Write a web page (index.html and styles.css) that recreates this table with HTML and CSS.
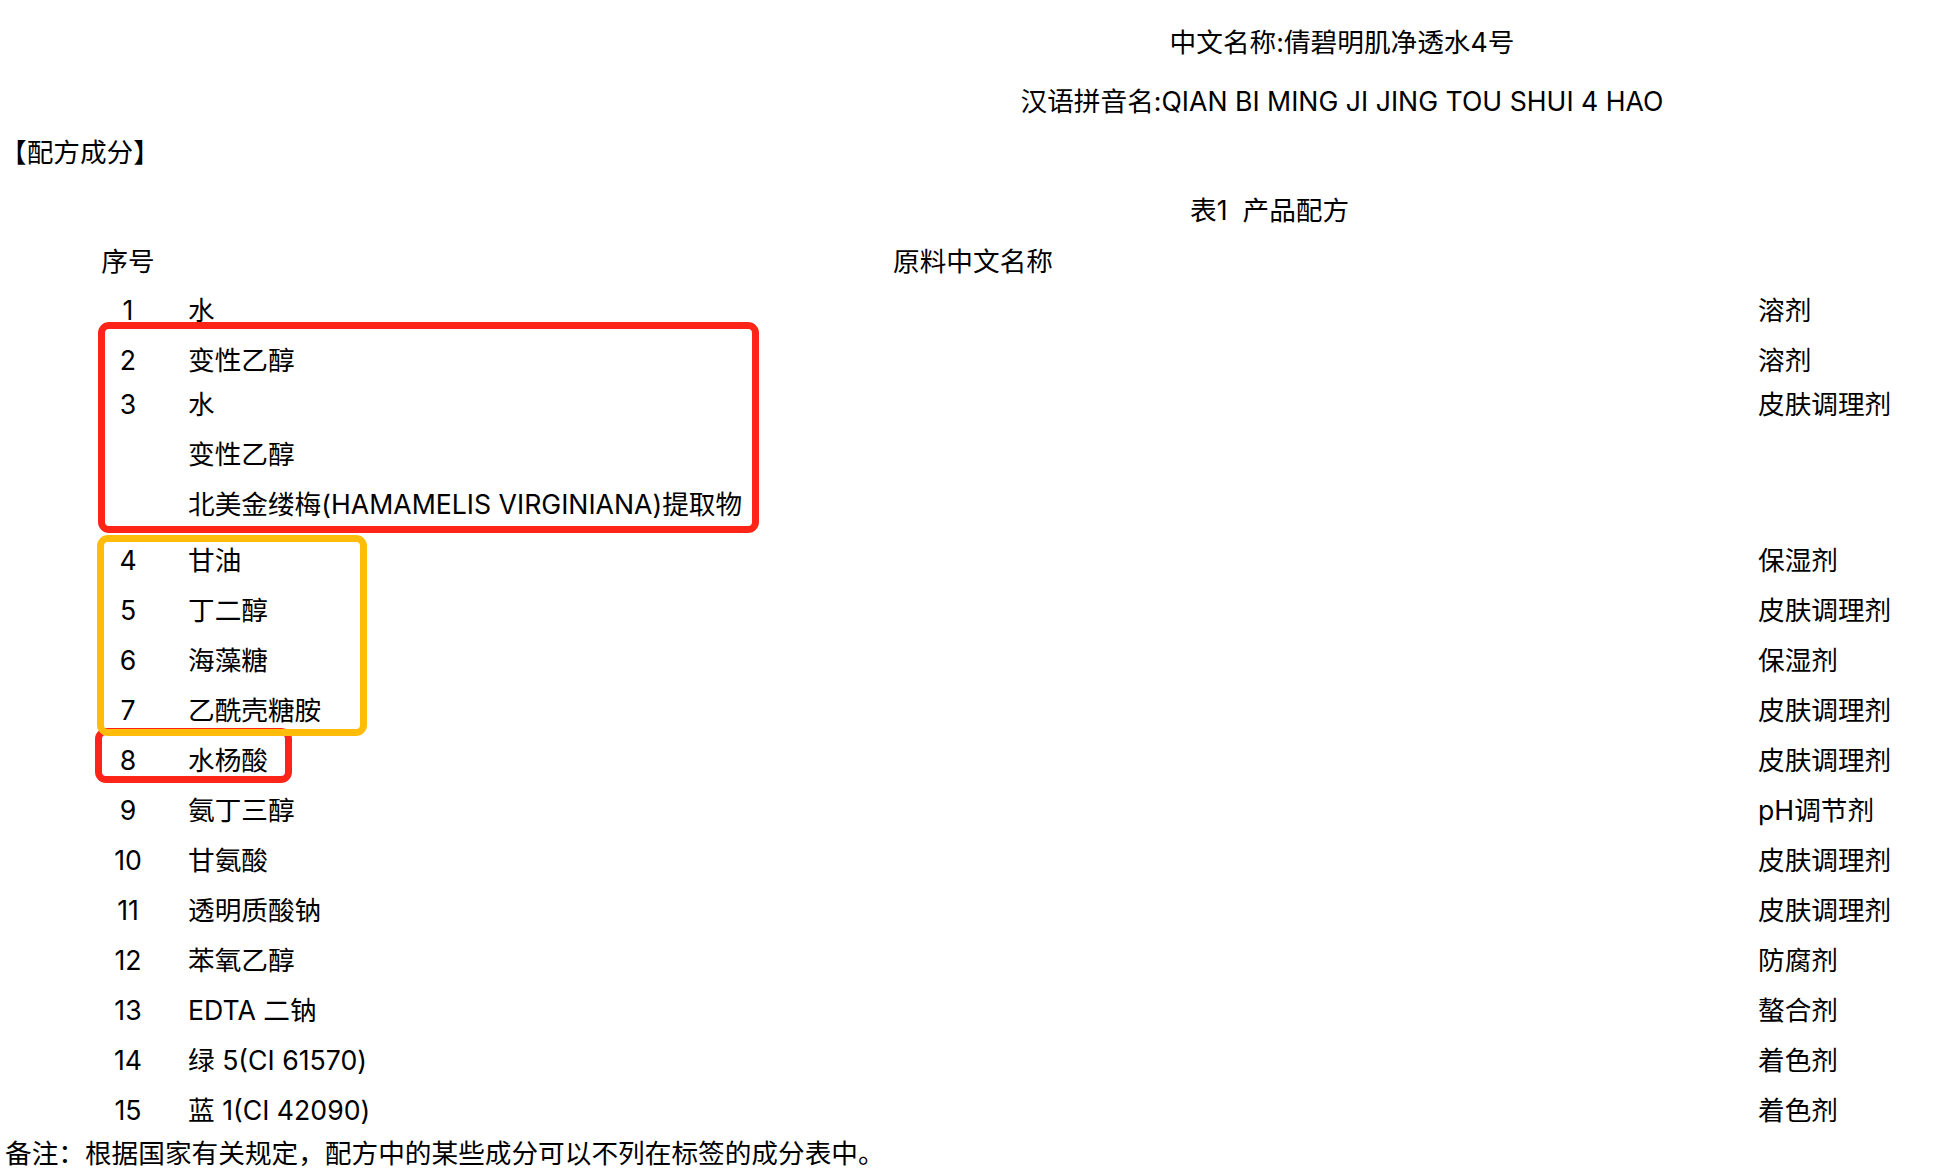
FILE: index.html
```html
<!DOCTYPE html>
<html lang="zh-CN">
<head>
    <meta charset="UTF-8">
    <meta name="viewport" content="width=device-width, initial-scale=1.0">
    <title>倩碧明肌净透水4号 配方成分</title>
    <link rel="stylesheet" href="styles.css">
</head>
<body>

<div class="page">
    <!-- Product names -->
    <p class="doc-title first">中文名称:倩碧明肌净透水4号</p>
    <p class="doc-title pinyin">汉语拼音名:QIAN BI MING JI JING TOU SHUI 4 HAO</p>

    <p class="section">【配方成分】</p>
    <p class="caption">表1&nbsp;&nbsp;产品配方</p>

    <!-- Formula table -->
    <div class="formula">
        <div class="formula-row head">
            <span class="num">序号</span>
            <span class="name">原料中文名称</span>
            <span class="func"></span>
        </div>
        <div class="formula-row"><span class="num">1</span><span class="name">水</span><span class="func">溶剂</span></div>
        <div class="formula-row"><span class="num">2</span><span class="name">变性乙醇</span><span class="func">溶剂</span></div>
        <div class="formula-row tight"><span class="num">3</span><span class="name">水</span><span class="func">皮肤调理剂</span></div>
        <div class="formula-row"><span class="num"></span><span class="name">变性乙醇</span><span class="func"></span></div>
        <div class="formula-row"><span class="num"></span><span class="name">北美金缕梅(HAMAMELIS VIRGINIANA)提取物</span><span class="func"></span></div>
        <div class="formula-row loose"><span class="num">4</span><span class="name">甘油</span><span class="func">保湿剂</span></div>
        <div class="formula-row"><span class="num">5</span><span class="name">丁二醇</span><span class="func">皮肤调理剂</span></div>
        <div class="formula-row"><span class="num">6</span><span class="name">海藻糖</span><span class="func">保湿剂</span></div>
        <div class="formula-row"><span class="num">7</span><span class="name">乙酰壳糖胺</span><span class="func">皮肤调理剂</span></div>
        <div class="formula-row"><span class="num">8</span><span class="name">水杨酸</span><span class="func">皮肤调理剂</span></div>
        <div class="formula-row"><span class="num">9</span><span class="name">氨丁三醇</span><span class="func">pH调节剂</span></div>
        <div class="formula-row"><span class="num">10</span><span class="name">甘氨酸</span><span class="func">皮肤调理剂</span></div>
        <div class="formula-row"><span class="num">11</span><span class="name">透明质酸钠</span><span class="func">皮肤调理剂</span></div>
        <div class="formula-row"><span class="num">12</span><span class="name">苯氧乙醇</span><span class="func">防腐剂</span></div>
        <div class="formula-row"><span class="num">13</span><span class="name">EDTA 二钠</span><span class="func">螯合剂</span></div>
        <div class="formula-row"><span class="num">14</span><span class="name">绿 5(CI 61570)</span><span class="func">着色剂</span></div>
        <div class="formula-row"><span class="num">15</span><span class="name">蓝 1(CI 42090)</span><span class="func">着色剂</span></div>

        <!-- highlight marks drawn over the table -->
        <div class="mark red mark-a"></div>
        <div class="mark red mark-c"></div>
        <div class="mark orange mark-b"></div>
    </div>

    <p class="note">备注：根据国家有关规定，配方中的某些成分可以不列在标签的成分表中。</p>
</div>

</body>
</html>
```

FILE: styles.css
```css
body {
    margin: 0;
    padding: 0;
    background-color: #ffffff;
    color: #000000;
    font-family: "Inter", "Noto Sans CJK SC", sans-serif;
    font-size: 26.67px;
}

.page {
    width: 1948px;
    height: 1173px;
    overflow: hidden;
}

p {
    margin: 0;
    line-height: 50px;
    white-space: nowrap;
}

/* Product names, centred on the right part of the page */
.doc-title {
    padding-left: 736px;
    text-align: center;
}

.doc-title.first {
    padding-top: 17px;
}

.doc-title.pinyin {
    margin-top: 9px;
}

.section {
    margin-top: 1px;
    padding-left: 0;
}

.caption {
    margin-top: 8px;
    padding-left: 1190px;
}

/* Formula table */
.formula {
    position: relative;
    margin-top: 1px;
}

.formula-row {
    display: grid;
    grid-template-columns: 60px 1600px auto;
    padding-left: 98px;
    height: 50px;
    line-height: 50px;
    white-space: nowrap;
}

.formula-row.head {
    height: 49px;
    line-height: 50px;
}

.formula-row.tight {
    margin-top: -6px;
}

.formula-row.loose {
    margin-top: 6px;
}

.num {
    text-align: center;
}

.name {
    padding-left: 30px;
}

.head .name {
    text-align: center;
}

/* Hand-drawn highlight boxes */
.mark {
    position: absolute;
    box-sizing: border-box;
    border: 7px solid;
    border-radius: 11px;
}

.mark.red {
    border-color: #fe2518;
}

.mark.orange {
    border-color: #ffbd0a;
}

.mark-a {
    left: 98px;
    top: 86px;
    width: 661px;
    height: 211px;
}

.mark-b {
    left: 97px;
    top: 299px;
    width: 270px;
    height: 201px;
}

.mark-c {
    left: 95px;
    top: 492px;
    width: 197px;
    height: 55px;
}

.note {
    margin-top: -2px;
    padding-left: 5px;
    line-height: 40px;
}
```
